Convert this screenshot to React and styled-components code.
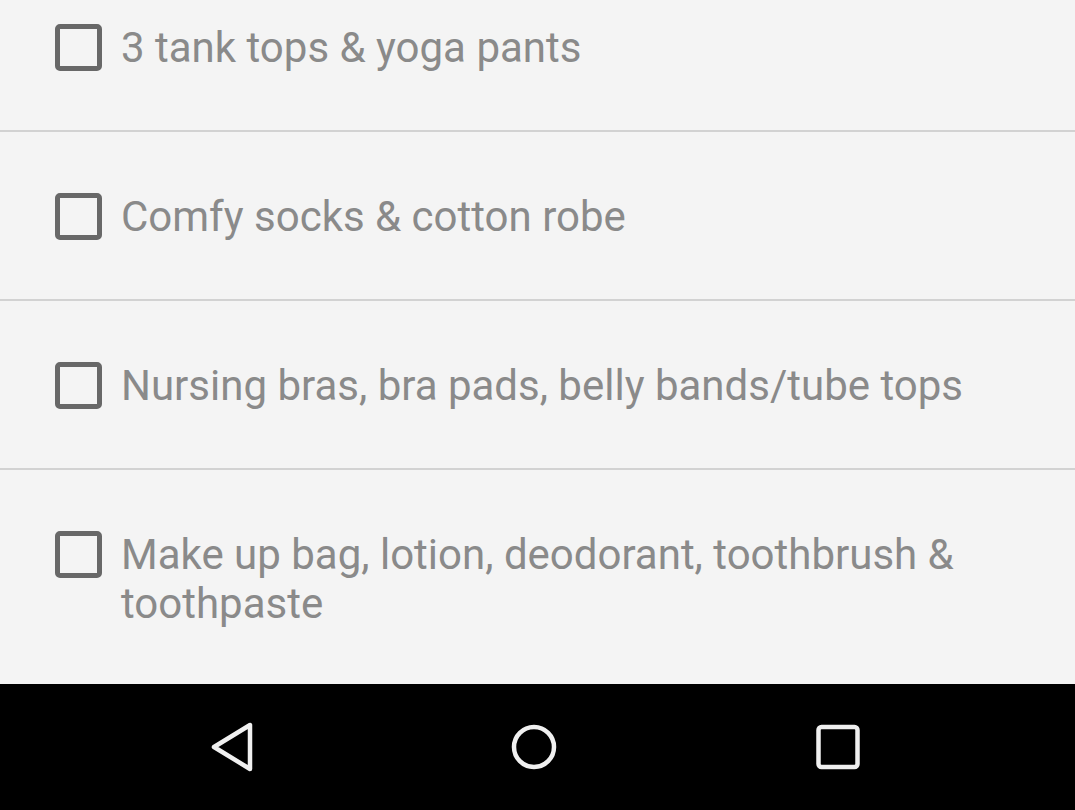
import React from 'react';
import styled, { createGlobalStyle } from 'styled-components';

const items = [
    '3 tank tops & yoga pants',
    'Comfy socks & cotton robe',
    'Nursing bras, bra pads, belly bands/tube tops',
    'Make up bag, lotion, deodorant, toothbrush & toothpaste',
];

export default function App() {
    return (
        <>
            <GlobalStyle />
            <Screen>
                <ListArea>
                    <List>
                        {items.map((text, i) => (
                            <Row key={i} last={i === items.length - 1}>
                                <Box />
                                <Label>{text}</Label>
                            </Row>
                        ))}
                    </List>
                </ListArea>
                <NavBar>
                    <NavButton>
                        <svg width="60" height="60" viewBox="0 0 60 60">
                            <path
                                d="M49 8 L49 52 L13 30 Z"
                                fill="none"
                                stroke="#f0f0f0"
                                strokeWidth="4.5"
                                strokeLinejoin="round"
                            />
                        </svg>
                    </NavButton>
                    <NavButton>
                        <svg width="60" height="60" viewBox="0 0 60 60">
                            <circle cx="30" cy="30" r="20" fill="none" stroke="#f0f0f0" strokeWidth="4.5" />
                        </svg>
                    </NavButton>
                    <NavButton>
                        <svg width="60" height="60" viewBox="0 0 60 60">
                            <rect x="10.5" y="10" width="39" height="40" rx="3" fill="none" stroke="#f0f0f0" strokeWidth="4.5" />
                        </svg>
                    </NavButton>
                </NavBar>
            </Screen>
        </>
    );
}

const GlobalStyle = createGlobalStyle`
    body {
        margin: 0;
        background: #f4f4f4;
        font-family: Roboto, "Liberation Sans", sans-serif;
    }
`;

const Screen = styled.div`
    width: 1075px;
    height: 810px;
    display: flex;
    flex-direction: column;
    overflow: hidden;
    background: #f4f4f4;
`;

const ListArea = styled.div`
    height: 684px;
    overflow: hidden;
`;

const List = styled.div`
    display: flex;
    flex-direction: column;
    margin-top: -37px;
`;

const Row = styled.div`
    display: flex;
    align-items: flex-start;
    gap: 19px;
    padding: 60px 60px 58px 55px;
    border-bottom: ${p => (p.last ? 'none' : '2px solid #d2d2d2')};
`;

const Box = styled.div`
    flex: none;
    width: 47px;
    height: 47px;
    margin-top: 1px;
    box-sizing: border-box;
    border: 5px solid #686868;
    border-radius: 5px;
`;

const Label = styled.div`
    font-size: 42px;
    line-height: 49px;
    color: #8a8a8a;
    max-width: 870px;
`;

const NavBar = styled.div`
    flex: none;
    height: 126px;
    background: #000;
    display: flex;
    align-items: center;
    justify-content: center;
    gap: 243.5px;
    padding-right: 7px;
`;

const NavButton = styled.div`
    width: 60px;
    height: 60px;
    display: flex;
    align-items: center;
    justify-content: center;
`;
